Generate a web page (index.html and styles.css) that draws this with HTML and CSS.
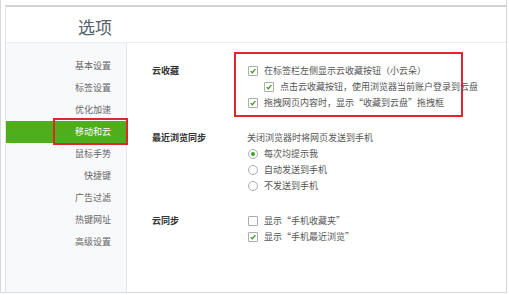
FILE: index.html
```html
<!DOCTYPE html>
<html lang="zh-CN">
<head>
  <meta charset="UTF-8">
  <title>选项</title>
  <link rel="stylesheet" href="styles.css">
</head>
<body>
  <div class="screen">
    <div class="window">
      <div class="header">选项</div>

      <div class="main">
        <ul class="sidebar">
          <li>基本设置</li>
          <li>标签设置</li>
          <li>优化加速</li>
          <li class="active">移动和云<span class="mark"></span></li>
          <li>鼠标手势</li>
          <li>快捷键</li>
          <li>广告过滤</li>
          <li>热键网址</li>
          <li>高级设置</li>
        </ul>

        <div class="content">
          <div class="section">
            <div class="label">云收藏</div>
            <div class="options marked">
              <div class="row"><span class="box checked"></span>在标签栏左侧显示云收藏按钮（小云朵）</div>
              <div class="row sub"><span class="box checked"></span>点击云收藏按钮，使用浏览器当前账户登录到云盘</div>
              <div class="row"><span class="box checked"></span>拖拽网页内容时，显示“收藏到云盘”拖拽框</div>
            </div>
          </div>

          <div class="section second">
            <div class="label">最近浏览同步</div>
            <div class="options">
              <div class="row plain">关闭浏览器时将网页发送到手机</div>
              <div class="row"><span class="radio on"></span>每次均提示我</div>
              <div class="row"><span class="radio"></span>自动发送到手机</div>
              <div class="row"><span class="radio"></span>不发送到手机</div>
            </div>
          </div>

          <div class="section third">
            <div class="label">云同步</div>
            <div class="options">
              <div class="row"><span class="box"></span>显示“手机收藏夹”</div>
              <div class="row"><span class="box checked"></span>显示“手机最近浏览”</div>
            </div>
          </div>
        </div>
      </div>
    </div>
  </div>
</body>
</html>
```

FILE: styles.css
```css
* {
  box-sizing: border-box;
}

body {
  margin: 0;
  background: #fff;
  font-family: "Noto Sans CJK SC", "Noto Sans", sans-serif;
}

.screen {
  width: 507px;
  height: 293px;
  border: 1px solid #d5d9dd;
  border-top: none;
  padding: 5px 0 0 4px;
}

.window {
  height: 100%;
  border-top: 2px solid #d0d4d7;
  border-left: 1px solid #e2e5e8;
  display: flex;
  flex-direction: column;
}

.header {
  height: 36px;
  padding: 4px 0 0 72px;
  line-height: 31px;
  font-size: 17px;
  color: #56606a;
  border-bottom: 1px solid #eceef0;
}

.main {
  flex: 1;
  display: flex;
}

.sidebar {
  width: 121px;
  margin: 0;
  padding: 12px 0 0;
  list-style: none;
  background: #f8f9fb;
  border-right: 1px solid #e4e7ea;
}

.sidebar li {
  position: relative;
  height: 22px;
  line-height: 22px;
  padding-right: 15px;
  text-align: right;
  font-size: 9px;
  color: #666;
}

.sidebar li.active {
  background: #4fae1c;
  color: #fff;
}

.mark {
  position: absolute;
  left: 47px;
  top: -3px;
  width: 75px;
  height: 27px;
  border: 2px solid #e3262c;
}

.content {
  flex: 1;
  padding: 9px 0 0 25px;
}

.section {
  display: flex;
}

.section.second {
  margin-top: 11px;
}

.section.third {
  margin-top: 15px;
}

.label {
  width: 82px;
  padding-top: 11px;
  line-height: 16px;
  font-size: 9px;
  font-weight: bold;
  color: #333;
}

.options {
  border: 2px solid transparent;
  padding: 0 11px;
  font-size: 9px;
  color: #555;
}

.options.marked {
  width: 229px;
  border-color: #e3262c;
  padding: 9px 11px 4px;
}

.section.second .label,
.section.third .label {
  padding-top: 2px;
}

.row {
  height: 16px;
  line-height: 16px;
  display: flex;
  align-items: center;
  white-space: nowrap;
}

.row.sub {
  padding-left: 16px;
}

.box,
.radio {
  flex: none;
  width: 10px;
  height: 10px;
  margin: 0 6px 0 1px;
  border: 1px solid #a9adb1;
  background: #fff;
}

.box {
  border-radius: 1px;
}

.box.checked {
  background: #fff url("data:image/svg+xml,%3Csvg xmlns='http://www.w3.org/2000/svg' viewBox='0 0 10 10'%3E%3Cpath d='M2 5.2 4.1 7.2 8 2.6' fill='none' stroke='%23389c1c' stroke-width='1.6'/%3E%3C/svg%3E") center / 8px 8px no-repeat;
}

.radio {
  border-radius: 50%;
  position: relative;
}

.radio.on::after {
  content: "";
  position: absolute;
  left: 2px;
  top: 2px;
  width: 4px;
  height: 4px;
  border-radius: 50%;
  background: #3aa61c;
}
```
